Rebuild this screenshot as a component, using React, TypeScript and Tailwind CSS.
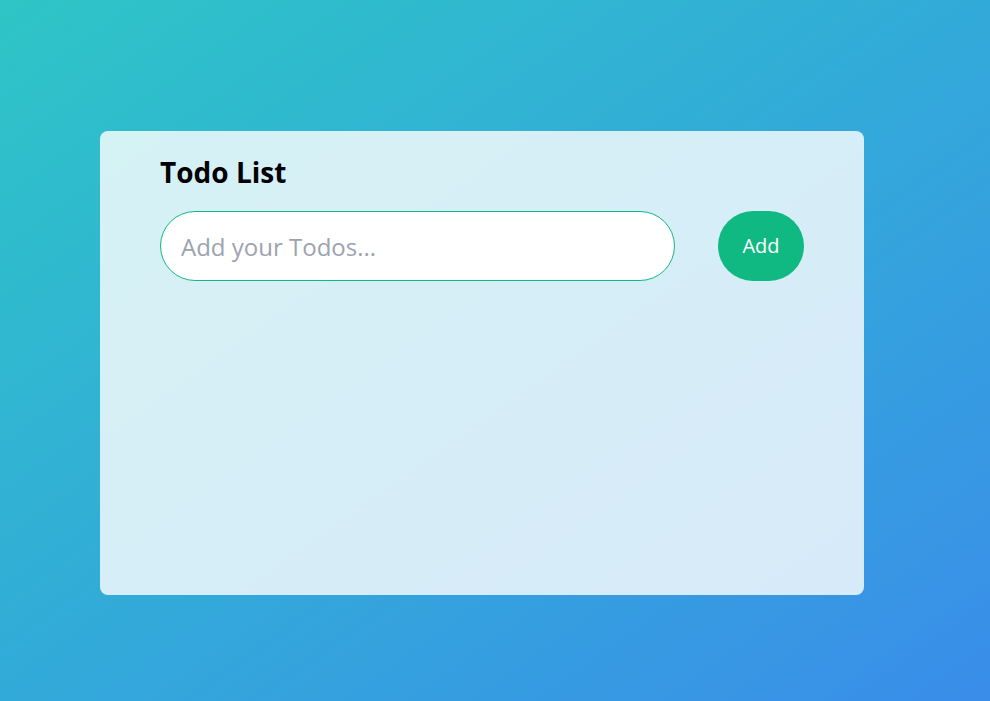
export default function App() {
  return (
    <div
      className="min-h-screen w-full bg-linear-to-br from-[#2ec5c6] to-[#3a8de9] pt-[131px] pl-[100px]"
      style={{ fontFamily: '"Open Sans", "Noto Sans", sans-serif' }}
    >
      <div className="w-[764px] h-[464px] rounded-lg bg-white/80 px-[60px] pt-[23px]">
        <h1 className="text-[28px] font-bold text-black leading-9">Todo List</h1>
        <div className="mt-[21px] flex items-center gap-[43px]">
          <input
            type="text"
            placeholder="Add your Todos..."
            className="h-[70px] w-[515px] rounded-full border border-[#10b981] bg-white px-5 text-2xl text-gray-700 placeholder:text-[#9ca3af] outline-none"
          />
          <button className="h-[70px] w-[86px] rounded-full bg-[#10b981] text-xl text-white">
            Add
          </button>
        </div>
      </div>
    </div>
  );
}
